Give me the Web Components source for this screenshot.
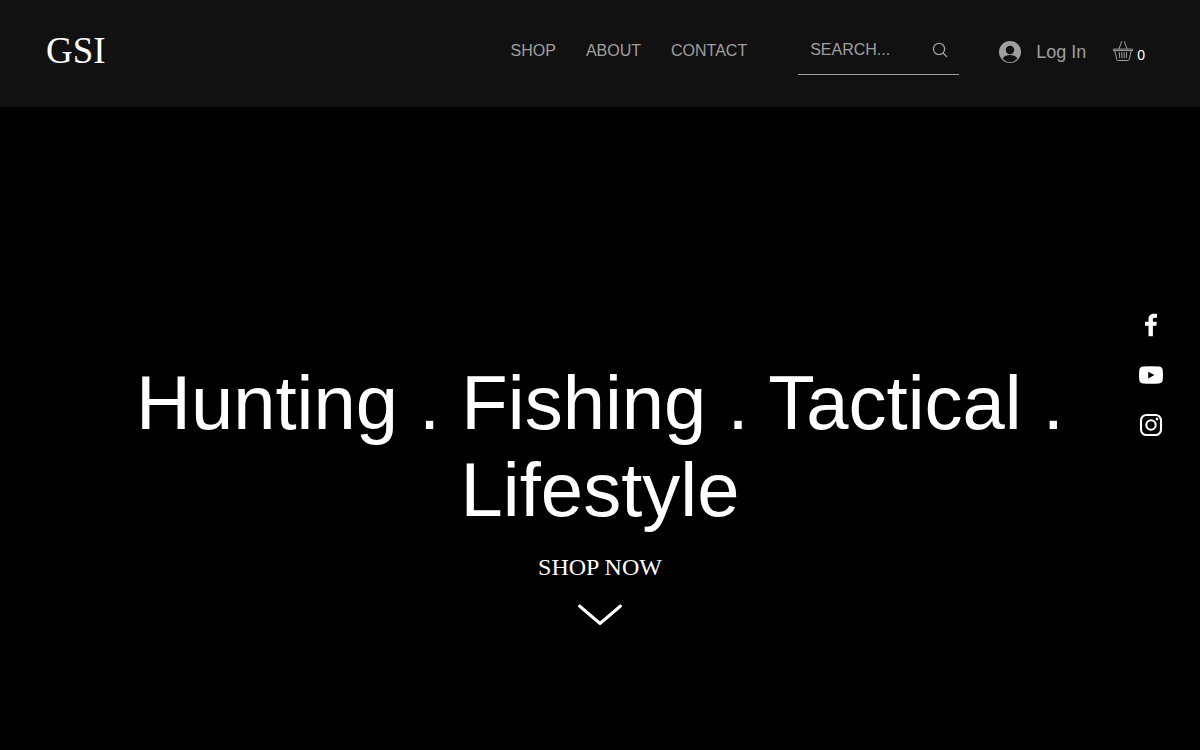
<!DOCTYPE html>
<html lang="en">
<head>
<meta charset="utf-8">
<meta name="viewport" content="width=device-width, initial-scale=1">
<title>GSI</title>
<style>
  body {
    margin: 0;
    background: #000;
    color: #fff;
    font-family: "Liberation Sans", Arial, sans-serif;
    font-size: 16px;
    --bar: #111;
    --muted: #a09f9f;
    --serif: "Liberation Serif", "Times New Roman", serif;
  }
</style>
</head>
<body>
<gsi-page>
  <gsi-header slot="header">
    <gsi-nav>
      <gsi-nav-link href="#shop">SHOP</gsi-nav-link>
      <gsi-nav-link href="#about">ABOUT</gsi-nav-link>
      <gsi-nav-link href="#contact">CONTACT</gsi-nav-link>
    </gsi-nav>
    <gsi-search></gsi-search>
    <gsi-account></gsi-account>
  </gsi-header>
  <gsi-hero>Hunting . Fishing . Tactical . Lifestyle</gsi-hero>
  <gsi-social slot="social"></gsi-social>
</gsi-page>

<script>
  const define = (name, markup, setup) => {
    const template = document.createElement('template');
    template.innerHTML = markup;
    customElements.define(name, class extends HTMLElement {
      constructor() {
        super();
        this.attachShadow({ mode: 'open' }).append(template.content.cloneNode(true));
      }
      connectedCallback() {
        if (setup) setup(this);
      }
    });
  };

  define('gsi-page', `
    <style>
      :host { display: flex; flex-direction: column; min-height: 100vh; }
      main { flex: 1; display: flex; flex-direction: column; }
    </style>
    <slot name="header"></slot>
    <main><slot></slot></main>
    <slot name="social"></slot>`);

  define('gsi-header', `
    <style>
      :host { display: block; background: var(--bar); }
      header { display: flex; align-items: center; padding: 26px 55px 32px 46px; }
      .logo { margin-right: auto; color: #fff; text-decoration: none; font: 37px/44px var(--serif); }
    </style>
    <header><a class="logo" href="#home">GSI</a><slot></slot></header>`);

  define('gsi-nav', `
    <style>
      :host { display: block; margin-right: 51px; }
      nav { display: flex; gap: 30px; }
    </style>
    <nav aria-label="Main"><slot></slot></nav>`);

  define('gsi-nav-link', `
    <style>
      :host { display: block; line-height: 20px; }
      a { color: var(--muted); text-decoration: none; }
    </style>
    <a><slot></slot></a>`, host => {
      host.shadowRoot.querySelector('a').setAttribute('href', host.getAttribute('href'));
    });

  define('gsi-search', `
    <style>
      :host { display: block; width: 161px; margin-right: 40px; }
      form { display: flex; align-items: center; box-sizing: border-box; height: 49px; padding: 0 11px 0 12px; border-bottom: 1px solid var(--muted); }
      input { flex: 1; min-width: 0; padding: 0; border: 0; outline: 0; background: none; color: var(--muted); font: inherit; }
      input::placeholder { color: var(--muted); opacity: 1; }
      button { display: flex; padding: 0; border: 0; background: none; color: var(--muted); }
    </style>
    <form role="search">
      <input type="text" placeholder="SEARCH..." aria-label="Search">
      <button type="button" aria-label="Submit search">
        <svg width="16" height="16" viewBox="0 0 16 16" fill="none" stroke="currentColor" stroke-width="1.3"><circle cx="7" cy="7" r="5.6"/><path d="M11 11l4 4"/></svg>
      </button>
    </form>`);

  define('gsi-account', `
    <style>
      :host { display: flex; align-items: center; gap: 27px; padding-top: 2px; }
      button { display: flex; align-items: center; gap: 15px; padding: 0; border: 0; background: none; color: var(--muted); font: 18px/24px "Liberation Sans", Arial, sans-serif; }
      a { display: flex; align-items: flex-end; gap: 4px; color: #fff; text-decoration: none; font-size: 14px; line-height: 16px; }
      svg { display: block; }
      a svg { color: var(--muted); margin-bottom: 2px; }
    </style>
    <button type="button">
      <svg width="22" height="22" viewBox="0 0 22 22"><circle cx="11" cy="11" r="11" fill="currentColor"/><circle cx="11" cy="9" r="4.2" fill="#111"/><path d="M3.7 17.4C5.2 15.2 8 14.1 11 14.1s5.8 1.1 7.3 3.3C16.500 19.800 13.900 21 11 21s-5.500-1.200-7.300-3.600z" fill="#111"/></svg>
      Log In
    </button>
    <a href="#cart" aria-label="Cart with 0 items">
      <svg width="20" height="20" viewBox="0 0 20 20" fill="none" stroke="currentColor"><path d="M.5 8.100h19v1.500H.5zM1.900 10l1.800 8.300q.3 1.200 1.500 1.200h9.600q1.200 0 1.500-1.200L18.100 10M5.900 8L8.500 1M14.100 8L11.500 1"/><path d="M8 1q.2-.8 1-.8M12 1q-.2-.8-1-.8M6.300 11.200l.4 6M8.800 11.200l.1 6M11.200 11.200l-.1 6M13.700 11.200l-.4 6"/></svg>
      <span>0</span>
    </a>`);

  define('gsi-hero', `
    <style>
      :host { display: block; padding: 252px 100px 120px; text-align: center; }
      h1 { margin: 0 0 20px; font-size: 76px; line-height: 87px; font-weight: 400; }
      a { display: inline-flex; flex-direction: column; align-items: center; gap: 22px; color: #fff; text-decoration: none; font: 24px/28px var(--serif); }
    </style>
    <h1><slot></slot></h1>
    <a href="#shop">SHOP NOW
      <svg width="46" height="24" viewBox="0 0 46 24" fill="none" stroke="#fff" stroke-width="3" stroke-linecap="round" stroke-linejoin="round"><path d="M2.500 3L23 20.500 43.500 3"/></svg>
    </a>`);

  define('gsi-social', `
    <style>
      :host { position: fixed; top: 312px; right: 36px; }
      ul { display: flex; flex-direction: column; gap: 24px; margin: 0; padding: 0; list-style: none; }
      a, svg { display: block; }
    </style>
    <ul>
      <li><a href="#facebook" aria-label="Facebook"><svg width="26" height="26" viewBox="0 0 26 26" fill="#fff"><path d="M10.500 24.200V13.800H7V9.700h3.500V7.100c0-3.500 2.100-5.400 5.300-5.400 1.500 0 2.800.1 3.200.2v3.900h-2.200c-1.500 0-1.900.7-1.900 1.800v2.100h4l-.6 4.100h-3.400v10.400z"/></svg></a></li>
      <li><a href="#youtube" aria-label="YouTube"><svg width="26" height="26" viewBox="0 0 26 26"><path d="M5 4.600q8-.7 16 0 3.200.2 3.700 3.400.6 5 0 10-.5 3.200-3.700 3.400-8 .7-16 0Q1.800 21.200 1.300 18q-.6-5 0-10Q1.800 4.800 5 4.600z" fill="#fff"/><path d="M10.200 9.800v6.600l6.200-3.300z" fill="#000"/></svg></a></li>
      <li><a href="#instagram" aria-label="Instagram"><svg width="26" height="26" viewBox="0 0 26 26" fill="none" stroke="#fff" stroke-width="2.100"><rect x="3" y="3" width="20" height="20" rx="5.500"/><circle cx="13" cy="13" r="4.700"/><circle cx="19" cy="7.100" r="1.400" fill="#fff" stroke="none"/></svg></a></li>
    </ul>`);
</script>
</body>
</html>
